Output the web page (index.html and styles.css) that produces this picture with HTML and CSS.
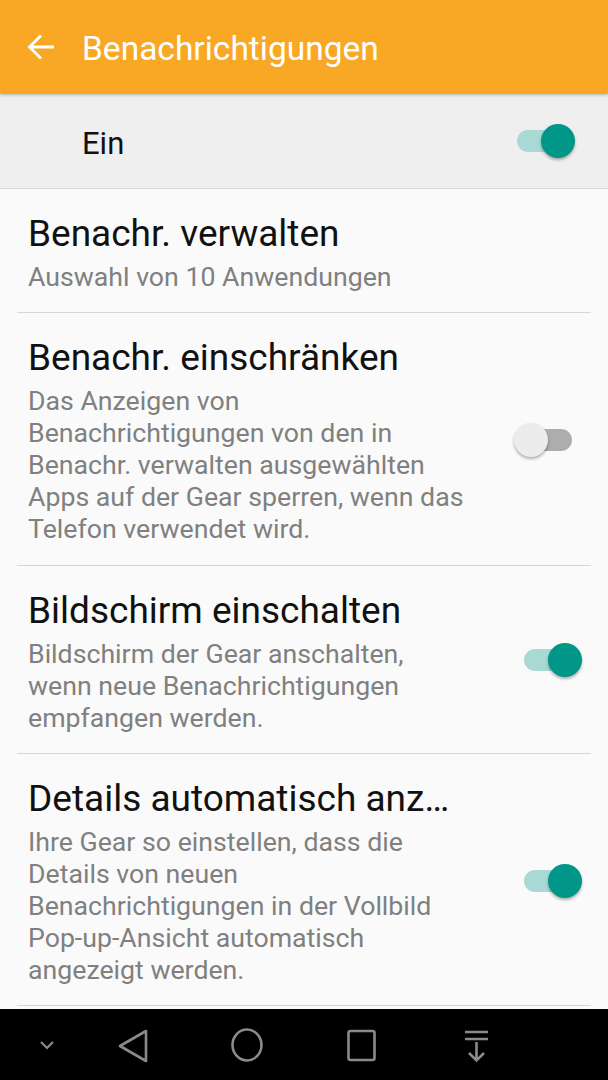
FILE: index.html
```html
<!DOCTYPE html>
<html lang="de">

<head>
    <meta charset="UTF-8">
    <meta name="viewport" content="width=device-width, initial-scale=1.0">
    <title>Benachrichtigungen</title>
    <link rel="stylesheet" href="styles.css">
</head>

<body>
    <div class="screen">
        <div class="appbar">
            <svg class="back" width="30" height="30" viewBox="0 0 30 30">
                <path d="M28 15H4M15 3.5L3.5 15 15 26.5" fill="none" stroke="#fff" stroke-width="2.8" />
            </svg>
            <span class="appbar-title">Benachrichtigungen</span>
        </div>

        <div class="master">
            <span class="master-label">Ein</span>
            <div class="switch on"><span class="track"></span><span class="thumb"></span></div>
        </div>

        <div class="list">
            <div class="item">
                <div class="text">
                    <div class="title">Benachr. verwalten</div>
                    <div class="sub">Auswahl von 10 Anwendungen</div>
                </div>
            </div>
            <div class="item">
                <div class="text">
                    <div class="title">Benachr. einschränken</div>
                    <div class="sub">Das Anzeigen von<br>Benachrichtigungen von den in<br>Benachr. verwalten ausgewählten<br>Apps auf der Gear sperren, wenn das<br>Telefon verwendet wird.</div>
                </div>
                <div class="switch off"><span class="track"></span><span class="thumb"></span></div>
            </div>
            <div class="item">
                <div class="text">
                    <div class="title">Bildschirm einschalten</div>
                    <div class="sub">Bildschirm der Gear anschalten,<br>wenn neue Benachrichtigungen<br>empfangen werden.</div>
                </div>
                <div class="switch on"><span class="track"></span><span class="thumb"></span></div>
            </div>
            <div class="item">
                <div class="text">
                    <div class="title">Details automatisch anz…</div>
                    <div class="sub">Ihre Gear so einstellen, dass die<br>Details von neuen<br>Benachrichtigungen in der Vollbild<br>Pop-up-Ansicht automatisch<br>angezeigt werden.</div>
                </div>
                <div class="switch on"><span class="track"></span><span class="thumb"></span></div>
            </div>
        </div>

        <div class="navbar">
            <svg class="nav-icon" width="24" height="24" viewBox="0 0 24 24">
                <path d="M6 9l6 6 6-6" fill="none" stroke="#8a8a8a" stroke-width="2.2" />
            </svg>
            <svg class="nav-icon" width="40" height="40" viewBox="0 0 40 40">
                <path d="M33 6v30L7 21z" fill="none" stroke="#8a8a8a" stroke-width="2.6" stroke-linejoin="round" />
            </svg>
            <svg class="nav-icon" width="40" height="40" viewBox="0 0 40 40">
                <ellipse cx="20" cy="20" rx="14.5" ry="15.5" fill="none" stroke="#8a8a8a" stroke-width="2.6" />
            </svg>
            <svg class="nav-icon" width="40" height="40" viewBox="0 0 40 40">
                <rect x="6.5" y="6" width="26" height="29" rx="2" fill="none" stroke="#8a8a8a" stroke-width="2.6" />
            </svg>
            <svg class="nav-icon" width="40" height="40" viewBox="0 0 40 40">
                <path d="M9 7h23M9 14h23M20.5 17v18M13 28l7.5 7.5L28 28" fill="none" stroke="#8a8a8a" stroke-width="2.6" />
            </svg>
        </div>
    </div>
</body>

</html>
```

FILE: styles.css
```css
body {
    margin: 0;
    font-family: Roboto, "Noto Sans", sans-serif;
    background-color: #000;
}

.screen {
    width: 608px;
    height: 1080px;
    display: flex;
    flex-direction: column;
    background-color: #FAFAFA;
    overflow: hidden;
}

.appbar {
    height: 94px;
    flex-shrink: 0;
    display: flex;
    align-items: center;
    padding-left: 26px;
    background-color: #F9A826;
    box-shadow: 0 1px 3px rgba(0, 0, 0, 0.25);
    position: relative;
    z-index: 1;
}

.back {
    margin-right: 26px;
}

.appbar-title {
    color: #fff;
    font-size: 33.5px;
    padding-top: 2px;
}

.master {
    height: 94px;
    flex-shrink: 0;
    display: flex;
    align-items: center;
    justify-content: space-between;
    padding: 0 33px 0 82px;
    background-color: #EFEFEF;
    border-bottom: 1px solid #D8D8D8;
}

.master-label {
    font-size: 31px;
    color: #111;
    padding-top: 5px;
}

.list {
    flex: 1;
    min-height: 0;
}

.item {
    display: flex;
    align-items: center;
    margin: 0 17px;
    padding: 21px 9px 19px 11px;
    border-bottom: 1px solid #D6D6D6;
}

.text {
    flex: 1;
    min-width: 0;
}

.title {
    font-size: 37px;
    line-height: 48px;
    color: #111;
    white-space: nowrap;
}

.sub {
    margin-top: 3px;
    font-size: 26.7px;
    line-height: 32.1px;
    color: #808080;
}

.switch {
    position: relative;
    width: 68px;
    height: 34px;
    flex-shrink: 0;
}

.switch .track {
    position: absolute;
    left: 10px;
    right: 10px;
    top: 6px;
    height: 22px;
    border-radius: 11px;
}

.switch .thumb {
    position: absolute;
    top: 0;
    width: 34px;
    height: 34px;
    border-radius: 50%;
    box-shadow: 0 2px 3px rgba(0, 0, 0, 0.3);
}

.switch.on .track {
    background-color: #A9D9D4;
}

.switch.on .thumb {
    right: 0;
    background-color: #009688;
}

.switch.off .track {
    background-color: #ADADAD;
}

.switch.off .thumb {
    left: 0;
    background-color: #ECECEC;
}

.navbar {
    height: 71px;
    flex-shrink: 0;
    display: flex;
    align-items: center;
    background-color: #000;
}

.navbar .nav-icon:nth-child(1) {
    margin-left: 35px;
}

.navbar .nav-icon:nth-child(2) {
    margin-left: 54px;
}

.navbar .nav-icon:nth-child(3) {
    margin-left: 74px;
}

.navbar .nav-icon:nth-child(4) {
    margin-left: 75px;
}

.navbar .nav-icon:nth-child(5) {
    margin-left: 74px;
}
```
